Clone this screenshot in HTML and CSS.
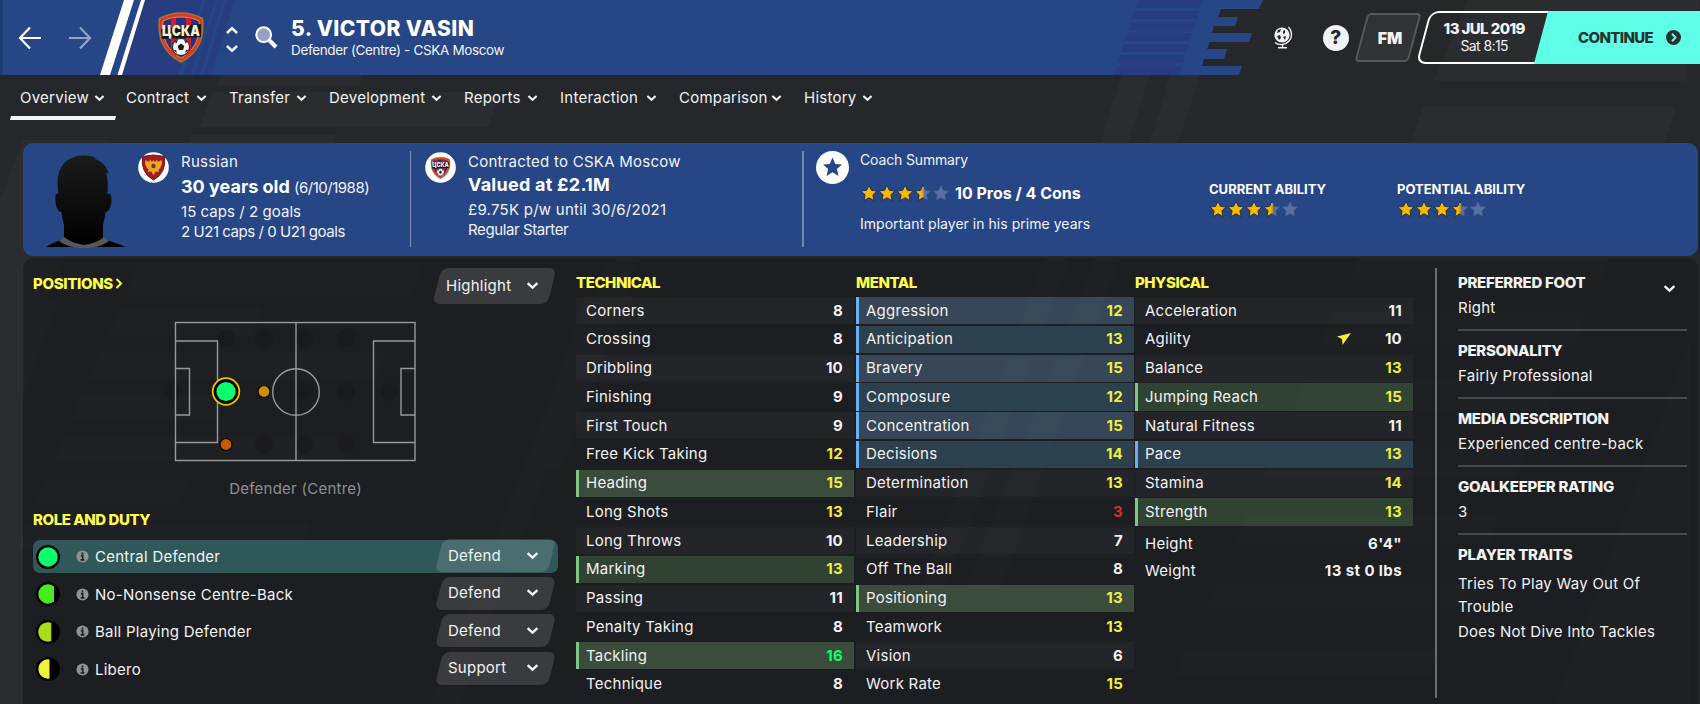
FILE: index.html
```
<!DOCTYPE html>
<html lang="en">
<head>
    <meta charset="UTF-8">
    <meta name="viewport" content="width=device-width, initial-scale=1.0">
    <title>Victor Vasin - Overview</title>
    <link rel="stylesheet" href="styles.css">
</head>
<body>
    <!-- shared icons -->
    <svg class="defs" width="0" height="0">
        <symbol id="chevron" viewBox="0 0 12 8">
            <path d="M1.5 1.8 L6 6 L10.5 1.8" fill="none" stroke="currentColor" stroke-width="2.2"/>
        </symbol>
        <symbol id="star" viewBox="0 0 18 18">
            <path d="M9 1.2 L11.4 6.3 L17 7 L12.9 10.8 L14 16.6 L9 13.8 L4 16.6 L5.1 10.8 L1 7 L6.6 6.3 Z"/>
        </symbol>
        <symbol id="half" viewBox="0 0 18 18">
            <path d="M9 1.2 L11.4 6.3 L17 7 L12.9 10.8 L14 16.6 L9 13.8 Z" fill="#5a6fa3" stroke="#3b5488"/>
            <path d="M9 1.2 L9 13.8 L4 16.6 L5.1 10.8 L1 7 L6.6 6.3 Z" fill="#f7b900" stroke="#23304a"/>
            <path d="M9 3 V13.4" stroke="#f7b900" stroke-width="1.4"/>
        </symbol>
        <symbol id="info" viewBox="0 0 14 14">
            <circle cx="7" cy="7" r="6.5" fill="currentColor"/>
            <path d="M7 2.6 V4.6 M5.2 6 H7.2 V10.4 M5 10.6 H9" stroke="#1e1f23" stroke-width="1.8" fill="none"/>
        </symbol>
        <symbol id="crest" viewBox="0 0 46 51">
            <path d="M23 1 C31 1 38 3 44.5 6.5 C46 22 44 39 23 50 C2 39 0 22 1.500 6.500 C8 3 15 1 23 1 Z" fill="#d8392b" stroke="#a8742c" stroke-width="1.5"/>
            <path d="M23 5 C30 5 36 6.500 41 9 C42 23 39 37 23 46 C7 37 4 23 5 9 C10 6.500 16 5 23 5 Z" fill="#2b2f7e" stroke="#e09a3a"/>
            <path d="M13 6 H18 V43 L13 39 Z M28 6 H33 V39 L28 43 Z" fill="#c8202c"/>
            <path d="M3 17 L43 12 V25 L4 27 Z" fill="#1a1516"/>
            <text x="23" y="24" class="crest-text" textLength="38" lengthAdjust="spacingAndGlyphs">ЦСКА</text>
            <circle cx="23" cy="35" r="8.500" fill="#f4f4f4" stroke="#222"/>
            <path d="M23 31.500 L26.300 34 L25 38 H21 L19.700 34 Z M17 29 L20 28 L18 32 Z M29 29 L26 28 L28 32 Z M15.500 38 L18 38 L19 41 Z M30.500 38 L28 38 L27 41 Z" fill="#1d1d1d"/>
        </symbol>
    </svg>

    <svg class="backdrop" width="1700" height="704" viewBox="0 0 1700 704">
        <g fill="#fff" fill-opacity=".022">
            <path d="M221 75 H362 L359 85 H218 Z M212 92 H500 L488 127 H200 Z M192 135 H335 L324 170 H181 Z"/>
            <path d="M23 140 H110 L0 420 V200 Z M0 300 H58 L23 400 V704 H0 Z"/>
            <path d="M1122 75 H1150 L1128 143 H1100 Z M1170 75 H1200 L1178 143 H1150 Z M1468 0 H1700 L1685 81 H1434 Z M1423 107 H1676 L1664 143 H1411 Z"/>
            <path d="M137 265 H422 L412 295 H127 Z M119 308 H261 L252 336 H109 Z M100 352 H386 L376 379 H90 Z M82 394 H225 L215 420 H72 Z M64 437 H350 L340 461 H54 Z M45 480 H187 L179 504 H36 Z M27 524 H309 L299 549 H18 Z"/>
            <path d="M550 400 L585 300 H610 L460 704 H430 Z M610 258 H640 L560 470 H530 Z M1045 258 H1070 L945 590 H920 Z M1095 258 H1120 L1000 590 H965 Z"/>
            <path d="M1358 258 H1610 L1602 281 H1349 Z M1333 311 H1586 L1575 344 H1320 Z M1305 379 H1560 L1548 411 H1292 Z M1277 447 H1530 L1516 477 H1262 Z M1246 515 H1499 L1489 543 H1234 Z M1217 583 H1470 L1460 607 H1206 Z M1186 650 H1438 L1430 674 H1177 Z"/>
            <path d="M1690 340 V704 H1555 Z"/>
        </g>
    </svg>

    <header class="topbar">
        <svg class="topbar-art" width="1275" height="75" viewBox="0 0 1275 75">
            <path d="M0 0 H1263 L1259 9 H1221 L1218 17 H1238 L1235 26 H1214 L1212 33 H1252 L1249 42 H1210 L1207 49 H1227 L1224 59 H1204 L1202 66 H1242 L1239 75 H0 Z" fill="#264686"/>
            <path d="M0 0 H3 V75 H0 Z" fill="#203c76"/>
            <path d="M145 0 H202 L178 75 H122 Z M205 0 H215 L191 75 H183 Z M218 0 H223 L200 75 H194 Z M227 0 H235 L211 75 H204 Z" fill="#283c80"/>
            <path d="M1139 0 H1203 L1200.500 8 H1136 Z M1134 11 H1199.500 L1196.800 19 H1131.500 Z M1131 22 H1196 L1193 30 H1128 Z M1127 33 H1192 L1189.500 41 H1124.500 Z M1124 44 H1189 L1186 52 H1121 Z M1120 55 H1185 L1182.500 63 H1117.500 Z M1117 66 H1181.500 L1179 75 H1114 Z" fill="#283c80"/>
            <path d="M124 0 H134 L110 75 H100 Z M141 0 H145 L122 75 H117.500 Z" fill="#fff"/>
        </svg>
        <div class="history-nav">
            <svg width="24" height="24" viewBox="0 0 24 24"><path d="M23 12 H2 M12 1.500 L2 12 L12 22.500" fill="none" stroke="#fff" stroke-width="2.200"/></svg>
            <svg class="forward" width="24" height="24" viewBox="0 0 24 24"><path d="M1 12 H22 M12 1.500 L22 12 L12 22.500" fill="none" stroke="#93a3c6" stroke-width="2.200"/></svg>
        </div>
        <svg class="club-logo" width="46" height="51"><use href="#crest"/></svg>
        <div class="stepper">
            <svg class="up" width="14" height="9"><use href="#chevron"/></svg>
            <svg width="14" height="9"><use href="#chevron"/></svg>
        </div>
        <svg class="search" width="23" height="23" viewBox="0 0 23 23">
            <circle cx="8.700" cy="8.700" r="7.400" fill="#93a3c6" stroke="#fff" stroke-width="2"/>
            <path d="M14.500 14.500 L21 21" stroke="#fff" stroke-width="4"/>
        </svg>
        <div class="player-title">
            <h1>5. VICTOR VASIN</h1>
            <p>Defender (Centre) - CSKA Moscow</p>
        </div>
        <svg class="globe" width="20" height="23" viewBox="0 0 20 23">
            <circle cx="9" cy="9" r="7.600" fill="#f2f2f2"/>
            <path d="M15.500 1 A10.300 10.300 0 0 1 2 16.500 M9.500 18.500 V21.500 M5 21.700 H14" fill="none" stroke="#f2f2f2" stroke-width="1.400"/>
            <path d="M5 4 L8 3 L7 6 L4 7 Z M10 5 L12 4 L12 7 L10 8 Z M4 10 L7 9 L8 12 L6 14 Z M10 11 L13 10 L12 14 Z" fill="#26272b"/>
        </svg>
        <div class="help">?</div>
        <div class="fm"><span>FM</span></div>
        <div class="date">
            <div class="date-text">
                <strong>13 JUL 2019</strong>
                <span>Sat 8:15</span>
            </div>
        </div>
        <div class="continue">
            <span>CONTINUE</span>
            <svg width="15" height="15" viewBox="0 0 15 15"><circle cx="7.500" cy="7.500" r="7.500" fill="#26332f"/><path d="M6 3.800 L9.500 7.500 L6 11.200" fill="none" stroke="#5effe6" stroke-width="2"/></svg>
        </div>
    </header>

    <nav class="tabs">
        <a class="tab active t1">Overview <svg width="11" height="8"><use href="#chevron"/></svg></a>
        <a class="tab t2">Contract <svg width="11" height="8"><use href="#chevron"/></svg></a>
        <a class="tab t3">Transfer <svg width="11" height="8"><use href="#chevron"/></svg></a>
        <a class="tab t4">Development <svg width="11" height="8"><use href="#chevron"/></svg></a>
        <a class="tab t5">Reports <svg width="11" height="8"><use href="#chevron"/></svg></a>
        <a class="tab t6">Interaction <svg width="11" height="8"><use href="#chevron"/></svg></a>
        <a class="tab t7">Comparison <svg width="11" height="8"><use href="#chevron"/></svg></a>
        <a class="tab t8">History <svg width="11" height="8"><use href="#chevron"/></svg></a>
    </nav>

    <section class="card">
        <div class="bio">
            <svg class="portrait" width="80" height="93" viewBox="0 0 80 93">
                <defs><linearGradient id="shade" x1="0" y1="0" x2="0" y2="1"><stop offset="0" stop-color="#1b1b1b"/><stop offset="1" stop-color="#000"/></linearGradient></defs>
                <path d="M0 92 C5 88 12 87 18 83 V70 C17 66 16 62 15.500 57 C11 57 9 50 9.500 41 C9.500 39 11 38 12.500 39 C11 28 11 18 16 11 C21 3 31 0 40 .5 L47 1.500 L51 3.500 H47 C54 5 60 10 62 17 L63 19 L60 17.500 C62 24 62 32 61.500 39 C65 38 65.500 41 65.500 45 C65 52 63 57 59.500 57 C59 62 58 66 57 70 V83 C63 87 73 88 79 92 Z" fill="url(#shade)"/>
                <path d="M18 82 C26 88 33 89 38.500 90 C45 89 52 87 58 82 L63 86 C56 91 48 93 38.500 93 C29 93 20 91 13 86 Z" fill="#58585c"/>
            </svg>
            <svg class="badge" width="31" height="31" viewBox="0 0 31 31">
                <circle cx="15.500" cy="15.500" r="15.300" fill="#fff"/>
                <path d="M4.500 4.500 Q15.500 1.500 26.500 4.500 Q28.500 21 15.500 28 Q2.500 21 4.500 4.500 Z" fill="#a31b1f" stroke="#7d1518"/>
                <path d="M15.500 8 L17 10 L19 7.500 L20 10 L23.500 8 Q25 14 20.500 17.500 L21 20 L17.500 19.500 L15.500 23.500 L13.500 19.500 L10 20 L10.500 17.500 Q6 14 7.500 8 L11 10 L12 7.500 L14 10 Z" fill="#e6a72a"/>
                <circle cx="15.500" cy="14" r="2.200" fill="#8b2a28"/>
            </svg>
            <div class="lines">
                <p>Russian</p>
                <p class="big"><strong>30 years old</strong> <span class="tight">(6/10/1988)</span></p>
                <p class="third">15 caps / 2 goals</p>
                <p class="fourth">2 U21 caps / 0 U21 goals</p>
            </div>
        </div>
        <div class="contract">
            <svg class="badge" width="31" height="31" viewBox="0 0 31 31">
                <circle cx="15.500" cy="15.500" r="15.300" fill="#fff"/>
                <use href="#crest" x="5.500" y="4.500" width="20" height="23"/>
            </svg>
            <div class="lines">
                <p>Contracted to CSKA Moscow</p>
                <p class="value"><strong>Valued at £2.1M</strong></p>
                <p>£9.75K p/w until 30/6/2021</p>
                <p class="squad-status">Regular Starter</p>
            </div>
        </div>
        <div class="coach">
            <svg class="badge" width="33" height="33" viewBox="0 0 33 33">
                <circle cx="16.500" cy="16.500" r="16.500" fill="#fff"/>
                <path d="M16.500 6.500 L19.300 13 L26 13.500 L20.900 18 L22.500 25 L16.500 21.300 L10.500 25 L12.100 18 L7 13.500 L13.700 13 Z" fill="#264686"/>
            </svg>
            <div class="lines">
                <p class="coach-label">Coach Summary</p>
                <p class="pros">
                    <span class="stars"><svg><use href="#star"/></svg><svg><use href="#star"/></svg><svg><use href="#star"/></svg><svg><use href="#half"/></svg><svg class="empty"><use href="#star"/></svg></span>
                    <strong>10 Pros / 4 Cons</strong>
                </p>
                <p class="coach-note">Important player in his prime years</p>
            </div>
        </div>
        <div class="ability current">
            <h4>CURRENT ABILITY</h4>
            <span class="stars"><svg><use href="#star"/></svg><svg><use href="#star"/></svg><svg><use href="#star"/></svg><svg><use href="#half"/></svg><svg class="empty"><use href="#star"/></svg></span>
        </div>
        <div class="ability">
            <h4>POTENTIAL ABILITY</h4>
            <span class="stars"><svg><use href="#star"/></svg><svg><use href="#star"/></svg><svg><use href="#star"/></svg><svg><use href="#half"/></svg><svg class="empty"><use href="#star"/></svg></span>
        </div>
    </section>

    <main class="panel">
        <section class="positions">
            <div class="positions-head">
                <h2>POSITIONS<svg width="8" height="11" viewBox="0 0 8 11"><path d="M1.500 1 L6 5.500 L1.500 10" fill="none" stroke="#ffff4b" stroke-width="2"/></svg></h2>
                <div class="select highlight"><span>Highlight</span><svg width="13" height="9"><use href="#chevron"/></svg></div>
            </div>
            <svg class="pitch" width="252" height="141" viewBox="164 321.500 252 141">
                <g fill="#000" fill-opacity=".13">
                    <circle cx="226" cy="339" r="9"/><circle cx="264" cy="339" r="9"/><circle cx="304" cy="339" r="9"/><circle cx="346" cy="339" r="9"/>
                    <circle cx="172" cy="392" r="9"/><circle cx="304" cy="392" r="9"/><circle cx="346" cy="392" r="9"/><circle cx="389" cy="392" r="9"/>
                    <circle cx="264" cy="445" r="9"/><circle cx="304" cy="445" r="9"/><circle cx="346" cy="445" r="9"/>
                </g>
                <g fill="none" stroke="#98999b" stroke-width="1.400">
                    <rect x="175.500" y="323" width="239.500" height="138"/>
                    <path d="M296 323 V461 M175.500 341.500 H217.500 V443 H175.500 M175.500 369 H189.500 V415.500 H175.500 M415 341.500 H373.500 V443 H415 M415 369 H401 V415.500 H415"/>
                    <circle cx="296" cy="392.500" r="23.300"/>
                </g>
                <circle cx="226" cy="392" r="13.300" fill="#050505" stroke="#f2c200" stroke-width="1.800"/>
                <circle cx="226" cy="392" r="9.600" fill="#0aff6c"/>
                <circle cx="264" cy="392" r="6" fill="#c88f00" stroke="#0a0a0a" stroke-width="1.200"/>
                <circle cx="226" cy="445" r="6" fill="#c85a00" stroke="#0a0a0a" stroke-width="1.200"/>
            </svg>
            <p class="caption">Defender (Centre)</p>
            <h2 class="role-head">ROLE AND DUTY</h2>
            <div class="role selected">
                <svg class="fit" width="24" height="24" viewBox="0 0 24 24"><circle cx="12" cy="12" r="12"/><circle cx="12" cy="12" r="9.700" fill="#0aff6c"/></svg>
                <svg class="info" width="13" height="13"><use href="#info"/></svg>
                <span class="role-name">Central Defender</span>
                <div class="select"><span>Defend</span><svg width="13" height="9"><use href="#chevron"/></svg></div>
            </div>
            <div class="role">
                <svg class="fit" width="24" height="24" viewBox="0 0 24 24"><circle cx="12" cy="12" r="12"/><path d="M18 4.400 A9.700 9.700 0 1 0 18 19.600 Z" fill="#4ae81e"/></svg>
                <svg class="info" width="13" height="13"><use href="#info"/></svg>
                <span class="role-name">No-Nonsense Centre-Back</span>
                <div class="select"><span>Defend</span><svg width="13" height="9"><use href="#chevron"/></svg></div>
            </div>
            <div class="role">
                <svg class="fit" width="24" height="24" viewBox="0 0 24 24"><circle cx="12" cy="12" r="12"/><path d="M15.300 2.900 A9.700 9.700 0 1 0 15.300 21.100 Z" fill="#a9dd1c"/></svg>
                <svg class="info" width="13" height="13"><use href="#info"/></svg>
                <span class="role-name">Ball Playing Defender</span>
                <div class="select"><span>Defend</span><svg width="13" height="9"><use href="#chevron"/></svg></div>
            </div>
            <div class="role">
                <svg class="fit" width="24" height="24" viewBox="0 0 24 24"><circle cx="12" cy="12" r="12"/><path d="M13.500 2.400 A9.700 9.700 0 1 0 13.500 21.600 Z" fill="#f0f23a"/></svg>
                <svg class="info" width="13" height="13"><use href="#info"/></svg>
                <span class="role-name">Libero</span>
                <div class="select"><span>Support</span><svg width="13" height="9"><use href="#chevron"/></svg></div>
            </div>
        </section>

        <section class="attributes">
            <h2>TECHNICAL</h2>
            <div class="rows">
                <div class="attr"><span>Corners</span><b>8</b></div>
                <div class="attr"><span>Crossing</span><b>8</b></div>
                <div class="attr"><span>Dribbling</span><b>10</b></div>
                <div class="attr"><span>Finishing</span><b>9</b></div>
                <div class="attr"><span>First Touch</span><b>9</b></div>
                <div class="attr"><span>Free Kick Taking</span><b class="good">12</b></div>
                <div class="attr key"><span>Heading</span><b class="good">15</b></div>
                <div class="attr"><span>Long Shots</span><b class="good">13</b></div>
                <div class="attr"><span>Long Throws</span><b>10</b></div>
                <div class="attr key"><span>Marking</span><b class="good">13</b></div>
                <div class="attr"><span>Passing</span><b>11</b></div>
                <div class="attr"><span>Penalty Taking</span><b>8</b></div>
                <div class="attr key"><span>Tackling</span><b class="great">16</b></div>
                <div class="attr"><span>Technique</span><b>8</b></div>
            </div>
        </section>

        <section class="attributes mental">
            <h2>MENTAL</h2>
            <div class="rows">
                <div class="attr pref"><span>Aggression</span><b class="good">12</b></div>
                <div class="attr pref"><span>Anticipation</span><b class="good">13</b></div>
                <div class="attr pref"><span>Bravery</span><b class="good">15</b></div>
                <div class="attr pref"><span>Composure</span><b class="good">12</b></div>
                <div class="attr pref"><span>Concentration</span><b class="good">15</b></div>
                <div class="attr pref"><span>Decisions</span><b class="good">14</b></div>
                <div class="attr"><span>Determination</span><b class="good">13</b></div>
                <div class="attr"><span>Flair</span><b class="poor">3</b></div>
                <div class="attr"><span>Leadership</span><b>7</b></div>
                <div class="attr"><span>Off The Ball</span><b>8</b></div>
                <div class="attr key"><span>Positioning</span><b class="good">13</b></div>
                <div class="attr"><span>Teamwork</span><b class="good">13</b></div>
                <div class="attr"><span>Vision</span><b>6</b></div>
                <div class="attr"><span>Work Rate</span><b class="good">15</b></div>
            </div>
        </section>

        <section class="attributes">
            <h2>PHYSICAL</h2>
            <div class="rows">
                <div class="attr"><span>Acceleration</span><b>11</b></div>
                <div class="attr"><span>Agility</span><svg class="trend" width="14" height="12" viewBox="0 0 14 12"><path d="M14 0 L0 3.500 L5 6 L5.500 12 Z" fill="#f2f23a"/></svg><b>10</b></div>
                <div class="attr"><span>Balance</span><b class="good">13</b></div>
                <div class="attr key"><span>Jumping Reach</span><b class="good">15</b></div>
                <div class="attr"><span>Natural Fitness</span><b>11</b></div>
                <div class="attr pref"><span>Pace</span><b class="good">13</b></div>
                <div class="attr"><span>Stamina</span><b class="good">14</b></div>
                <div class="attr key"><span>Strength</span><b class="good">13</b></div>
            </div>
            <div class="build"><span>Height</span><b>6'4"</b></div>
            <div class="build"><span>Weight</span><b>13 st 0 lbs</b></div>
        </section>

        <aside class="info-list">
            <div class="info-item">
                <h3>PREFERRED FOOT</h3>
                <p>Right</p>
                <svg class="collapse" width="13" height="9"><use href="#chevron"/></svg>
            </div>
            <div class="info-item"><h3>PERSONALITY</h3><p>Fairly Professional</p></div>
            <div class="info-item"><h3>MEDIA DESCRIPTION</h3><p>Experienced centre-back</p></div>
            <div class="info-item"><h3>GOALKEEPER RATING</h3><p>3</p></div>
            <div class="info-item traits">
                <h3>PLAYER TRAITS</h3>
                <p>Tries To Play Way Out Of Trouble</p>
                <p>Does Not Dive Into Tackles</p>
            </div>
        </aside>
    </main>
</body>
</html>
```
FILE: styles.css
```
* {
    box-sizing: border-box;
}

body {
    margin: 0;
    width: 1700px;
    height: 704px;
    overflow: hidden;
    position: relative;
    background: #26272b;
    color: #f2f2f2;
    font-family: Inter, "Liberation Sans", sans-serif;
    font-size: 15px;
    letter-spacing: 0.25px;
}

h1, h2, h3, h4, p {
    margin: 0;
}

svg {
    display: block;
    flex: none;
}

.defs {
    display: none;
}

.backdrop {
    position: absolute;
    top: 0;
    left: 0;
    z-index: -1;
}

/* top bar */
.topbar {
    position: relative;
    display: flex;
    height: 75px;
    align-items: center;
    overflow: hidden;
}

.topbar > * {
    flex: none;
}

.topbar-art {
    position: absolute;
    top: 0;
    left: 0;
    z-index: -1;
}

.history-nav {
    display: flex;
    gap: 26px;
    width: 140px;
    padding-left: 18px;
}

.club-logo {
    margin-left: 18px;
}

.crest-text {
    font: 900 15px Inter, sans-serif;
    fill: #f6efd9;
    letter-spacing: 0;
    text-anchor: middle;
}

.stepper {
    display: flex;
    flex-direction: column;
    gap: 9px;
    margin: 3px 0 0 21px;
}

.stepper .up {
    transform: rotate(180deg);
}

.search {
    margin-left: 16px;
}

.player-title {
    width: 982px;
    padding-left: 13px;
}

.player-title h1 {
    font-size: 21px;
    font-weight: 800;
    line-height: 25px;
    letter-spacing: 0.45px;
    color: #fff;
}

.player-title p {
    font-size: 13.5px;
    line-height: 19px;
    letter-spacing: -0.35px;
}

.globe {
    margin-left: 13px;
}

.help {
    width: 26px;
    height: 26px;
    margin-left: 30px;
    border-radius: 50%;
    background: #f2f2f2;
    color: #26272b;
    font-size: 19px;
    font-weight: 800;
    line-height: 26px;
    text-align: center;
}

.fm {
    width: 54px;
    height: 49px;
    margin-left: 12px;
    border: 2px solid #56575a;
    border-radius: 4px;
    background: #313236;
    transform: skewX(-15deg);
    display: flex;
    align-items: center;
    justify-content: center;
    font-size: 16px;
    font-weight: 900;
    letter-spacing: -0.3px;
}

.fm span {
    transform: skewX(15deg);
    padding-left: 5px;
}

.date {
    width: 124px;
    height: 53px;
    margin-left: 8px;
    border: 2px solid #fff;
    border-radius: 9px 0 0 9px;
    transform: skewX(-15deg);
}

.date-text {
    transform: skewX(15deg);
    display: flex;
    flex-direction: column;
    align-items: center;
    padding: 5px 4px 0 0;
}

.date-text strong {
    font-weight: 800;
    line-height: 21px;
    letter-spacing: -0.6px;
}

.date-text span {
    font-size: 14px;
    line-height: 14px;
    letter-spacing: -0.6px;
}

.continue {
    width: 190px;
    height: 53px;
    margin-left: -6px;
    background: #5effe6;
    transform: skewX(-15deg);
    display: flex;
    align-items: center;
    gap: 13px;
    padding-left: 37px;
    color: #26332f;
    font-weight: 800;
    letter-spacing: -0.65px;
}

.continue span, .continue svg {
    transform: skewX(15deg);
}

/* tabs */
.tabs {
    display: flex;
    height: 68px;
    padding-left: 10px;
}

.tab {
    display: flex;
    height: 45px;
    align-items: center;
    justify-content: space-between;
    margin-right: 22px;
}

.tab svg {
    margin-top: 1px;
}

.active {
    position: relative;
    padding: 0 11px 0 10px;
    margin-right: 10px;
}

.active::after {
    content: "";
    position: absolute;
    left: 0;
    bottom: 0;
    width: 106px;
    height: 4px;
    background: #f5f5f5;
    clip-path: polygon(1px 0, 100% 0, 105px 100%, 0 100%);
}

.t1 { width: 106px; }
.t2 { width: 81px; }
.t3 { width: 78px; }
.t4 { width: 113px; }
.t5 { width: 74px; }
.t6 { width: 97px; }
.t7 { width: 103px; }
.t8 { width: 69px; }

/* player summary card */
.card {
    display: flex;
    width: 1675px;
    height: 113px;
    margin-left: 23px;
    padding: 8px 0 9px;
    border-radius: 10px;
    background: #264686;
}

.bio, .contract, .coach {
    display: flex;
}

.bio {
    width: 388px;
    padding-left: 23px;
    border-right: 1px solid #8492b4;
}

.portrait {
    margin-top: 4px;
}

.badge {
    margin: 1px 12px 0 0;
}

.bio .badge {
    margin-left: 12px;
    margin-right: 12px;
}

.lines p {
    line-height: 21px;
    white-space: nowrap;
}

.lines strong {
    font-size: 18px;
    font-weight: 700;
    color: #fff;
}

.lines p.big {
    line-height: 29px;
    letter-spacing: 0;
}

.lines .tight {
    letter-spacing: -0.5px;
}

.lines p.third {
    line-height: 19px;
    letter-spacing: 0.05px;
}

.lines p.fourth {
    letter-spacing: -0.45px;
}

.contract {
    width: 393px;
    padding-left: 14px;
    border-right: 2px solid #7384ad;
}

.lines p.value {
    line-height: 26px;
}

.lines p.squad-status {
    line-height: 19px;
    letter-spacing: -0.4px;
}

.coach {
    width: 405px;
    padding-left: 12px;
}

.coach .badge {
    margin: 0 11px 0 0;
}

.lines p.coach-label {
    font-size: 14px;
    line-height: 17px;
    letter-spacing: -0.15px;
}

.pros {
    display: flex;
    align-items: center;
    gap: 5px;
    height: 49px;
}

.pros strong {
    font-size: 16px;
    letter-spacing: 0;
    padding-top: 1px;
}

.lines p.coach-note {
    font-size: 14px;
    line-height: 14px;
    letter-spacing: 0.03px;
}

.stars {
    display: flex;
}

.stars svg {
    width: 18px;
    height: 18px;
    fill: #f7b900;
    stroke: #23304a;
}

.stars .empty {
    fill: #5a6fa3;
    stroke: #3b5488;
}

.ability {
    padding-top: 30px;
}

.ability h4 {
    font-size: 13px;
    font-weight: 700;
    line-height: 16px;
    letter-spacing: 0;
    color: #fff;
}

.ability .stars {
    margin-top: 3px;
}

.current {
    width: 188px;
}

/* main panel */
.panel {
    display: flex;
    width: 1675px;
    height: 460px;
    margin: 2px 0 0 23px;
    border-radius: 10px;
    background: rgba(24, 25, 29, 0.6);
}

h2 {
    font-size: 15px;
    font-weight: 800;
    letter-spacing: -0.45px;
    color: #ffff4b;
}

.positions {
    width: 553px;
    padding: 10px 18px 0 10px;
}

.positions-head {
    display: flex;
    justify-content: space-between;
    padding-right: 2px;
}

.positions-head h2 {
    display: flex;
    align-items: center;
    gap: 2px;
    height: 31px;
    letter-spacing: -0.35px;
}

.select {
    position: relative;
    z-index: 0;
    display: flex;
    align-items: center;
    justify-content: space-between;
    width: 121px;
    height: 33px;
    padding: 0 17px 1px 13px;
}

.select::before {
    content: "";
    position: absolute;
    top: 0;
    bottom: 0;
    left: 4px;
    right: 4px;
    z-index: -1;
    border-radius: 7px;
    background: rgba(255, 255, 255, 0.13);
    transform: skewX(-14deg);
}

.highlight {
    width: 123px;
    height: 36px;
    padding-bottom: 2px;
}

.pitch {
    margin: 17px 0 0 131px;
}

.caption {
    margin-top: 17px;
    line-height: 20px;
    text-align: center;
    color: #8f9092;
}

.role-head {
    height: 31px;
    line-height: 22px;
    margin-top: 10px;
}

.role {
    display: flex;
    align-items: center;
    height: 33px;
    margin-bottom: 4.5px;
    border-radius: 7px;
    padding: 0 2px 0 3px;
}

.role.selected {
    background: #30585a;
}

.role .info {
    margin: 0 6px 0 16px;
    color: #919293;
}

.role .select {
    margin: -2px 0 0 auto;
}

.attributes {
    width: 278px;
    margin-right: 2px;
    padding-top: 15px;
}

.mental {
    margin-right: 1px;
}

.attributes h2 {
    height: 24px;
    line-height: 20px;
}

.attr {
    display: flex;
    align-items: center;
    height: 27.25px;
    margin-bottom: 1.5px;
    padding: 0 11px 1px 7px;
    border-left: 3px solid transparent;
}

.attr span, .build span {
    flex: 1;
}

.attr:nth-child(odd) {
    background: rgba(255, 255, 255, 0.035);
}

.attr.key {
    border-left-color: #7fc584;
    background: rgba(108, 180, 104, 0.25);
}

.attr.key:nth-child(odd) {
    background: rgba(133, 190, 128, 0.29);
}

.attr.pref {
    border-left-color: #66b2f5;
    background: rgba(84, 158, 200, 0.27);
}

.attr.pref:nth-child(odd) {
    background: rgba(112, 165, 205, 0.31);
}

.attr b, .build b {
    font-weight: 700;
}

.attr .good {
    color: #eef03c;
}

.attr .great {
    color: #0aff6c;
}

.attr .poor {
    color: #d22f2f;
}

.trend {
    margin: 1px 34px 0 0;
}

.build {
    display: flex;
    height: 27px;
    align-items: center;
    padding: 4px 11px 0 10px;
}

.rows + .build {
    margin-top: 2px;
}

.build b {
    letter-spacing: 0.4px;
}

.info-list {
    width: 252px;
    height: 430px;
    margin: 10px 0 0 20px;
    padding-left: 21px;
    border-left: 2px solid #6b6c6e;
}

.info-item {
    position: relative;
    height: 68px;
    border-bottom: 2px solid #48494c;
    padding-top: 10px;
}

.info-item:first-child {
    height: 63px;
    padding-top: 5px;
}

.info-item h3 {
    font-size: 15px;
    font-weight: 800;
    line-height: 20px;
    letter-spacing: -0.3px;
}

.info-item p {
    line-height: 29px;
}

.collapse {
    position: absolute;
    right: 11px;
    top: 16px;
}

.info-item.traits {
    border: 0;
}

.info-item.traits p {
    line-height: 23px;
    margin-top: 2px;
}

.info-item.traits h3 + p {
    margin-top: 7px;
}
```
